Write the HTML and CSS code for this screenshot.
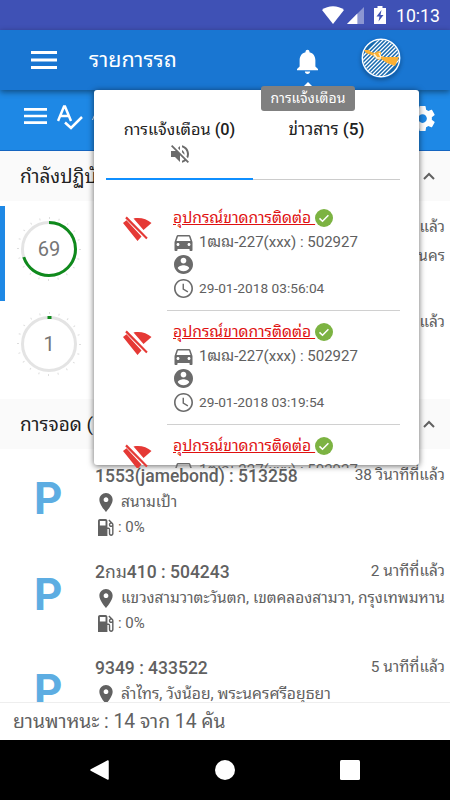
FILE: index.html
```html
<!DOCTYPE html>
<html lang="th">
<head>
    <meta charset="utf-8">
    <title>รายการรถ</title>
    <link rel="stylesheet" href="styles.css">
</head>
<body>
    <svg class="defs" width="0" height="0">
        <symbol id="menu" viewBox="0 0 26 18"><path d="M0 0h26v3H0zM0 7.5h26v3H0zM0 15h26v3H0z"/></symbol>
        <symbol id="wifi-off" viewBox="0 0 29 25"><path d="M0 7 3.500 4.300 18.500 20.500 14.500 25zM10.500 2.500C17 1 24 3 28.500 7L20.500 14zM2.200 2.200 3.800.600 24.700 21.700 23.200 23.200z"/></symbol>
        <symbol id="car" viewBox="3 5 18 16"><path d="M18.920 6.010C18.720 5.420 18.160 5 17.500 5h-11c-.66 0-1.210.42-1.420 1.010L3 12v8c0 .55.45 1 1 1h1c.55 0 1-.45 1-1v-1h12v1c0 .55.45 1 1 1h1c.55 0 1-.45 1-1v-8l-2.080-5.990zM6.500 16c-.83 0-1.500-.67-1.500-1.500S5.670 13 6.500 13s1.500.67 1.500 1.500S7.330 16 6.500 16zm11 0c-.83 0-1.500-.67-1.500-1.500s.67-1.500 1.500-1.500 1.500.67 1.500 1.500-.67 1.500-1.500 1.500zM5 11l1.500-4.500h11L19 11H5z"/></symbol>
        <symbol id="person" viewBox="2 2 20 20"><path d="M12 2C6.480 2 2 6.480 2 12s4.480 10 10 10 10-4.480 10-10S17.520 2 12 2zm0 3c1.660 0 3 1.340 3 3s-1.340 3-3 3-3-1.340-3-3 1.340-3 3-3zm0 14.200c-2.500 0-4.710-1.280-6-3.220.03-1.990 4-3.080 6-3.080 1.990 0 5.970 1.090 6 3.080-1.290 1.940-3.500 3.220-6 3.220z"/></symbol>
        <symbol id="clock" viewBox="2 2 20 20"><path d="M11.990 2C6.470 2 2 6.480 2 12s4.470 10 9.990 10C17.520 22 22 17.520 22 12S17.520 2 11.990 2zM12 20.300c-4.600 0-8.300-3.700-8.300-8.300s3.700-8.300 8.300-8.300 8.300 3.700 8.300 8.300-3.700 8.300-8.300 8.300zm.5-13.300H11v6l5.250 3.150.75-1.230-4.500-2.670z"/></symbol>
        <symbol id="check" viewBox="0 0 18 18"><circle cx="9" cy="9" r="9" fill="#7cb342"/><path d="M4.500 9.400 7.500 12.300 13.400 6.200" fill="none" stroke="#fff" stroke-width="1.500"/></symbol>
        <symbol id="pin" viewBox="5 2 14 20"><path d="M12 2C8.130 2 5 5.130 5 9c0 5.250 7 13 7 13s7-7.750 7-13c0-3.870-3.130-7-7-7zm0 9.500c-1.380 0-2.500-1.120-2.500-2.500s1.120-2.500 2.500-2.500 2.500 1.120 2.500 2.500-1.120 2.500-2.500 2.500z"/></symbol>
        <symbol id="fuel" viewBox="4 3 17 18"><path d="M19.770 7.230l.01-.01-3.720-3.720L15 4.560l2.110 2.110c-.94.36-1.610 1.260-1.610 2.330 0 1.380 1.120 2.500 2.500 2.500.36 0 .69-.08 1-.21v7.210c0 .55-.45 1-1 1s-1-.45-1-1V14c0-1.100-.9-2-2-2h-1V5c0-1.100-.9-2-2-2H6c-1.100 0-2 .9-2 2v16h10v-7.500h1.500v5c0 1.380 1.120 2.500 2.500 2.500s2.500-1.120 2.500-2.500V9c0-.69-.28-1.320-.73-1.770zM12 10H6V5h6v5zm6 0c-.55 0-1-.45-1-1s.45-1 1-1 1 .45 1 1-.45 1-1 1z"/></symbol>
        <symbol id="chevron" viewBox="0 0 12 8"><path d="M1 7 6 2 11 7" fill="none" stroke="#616161" stroke-width="2"/></symbol>
    </svg>

    <div class="statusbar">
        <svg class="wifi" viewBox="0 0 22 18"><path d="M0 4C6-1 16-1 22 4L11 18z"/></svg>
        <svg class="signal" viewBox="0 0 18 18"><path d="M18 0v18H0z" opacity=".4"/><path d="M11 7v11H0z"/></svg>
        <svg class="battery" viewBox="0 0 12 18"><path d="M3.500 0h5v2H12v16H0V2h3.500z"/><path d="M7.500 4 2.500 10.500h3L4.500 15.500l5-6.500h-3z" fill="#3f51b5"/></svg>
        <span class="time">10:13</span>
    </div>

    <header class="header">
        <svg class="menu-icon"><use href="#menu"/></svg>
        <h1 class="title">รายการรถ</h1>
        <svg class="bell" viewBox="4 2 16 20" preserveAspectRatio="none"><path d="M12 22c1.100 0 2-.9 2-2h-4c0 1.100.9 2 2 2zm6-6v-5c0-3.070-1.630-5.640-4.500-6.320V4c0-.83-.67-1.500-1.500-1.500s-1.500.67-1.500 1.500v.68C7.640 5.360 6 7.920 6 11v5l-2 2v1h16v-1l-2-2z"/></svg>
        <svg class="logo" viewBox="0 0 40 40">
            <clipPath id="disc"><circle cx="20" cy="20" r="18"/></clipPath>
            <circle cx="20" cy="20" r="18.700" fill="#1769ae" stroke="#fff" stroke-width="1.400"/>
            <g clip-path="url(#disc)">
                <path d="M-20 40 20 0M-16 40 24 0M-12 40 28 0M-8 40 32 0M-4 40 36 0M0 40 40 0M4 40 44 0M8 40 48 0M12 40 52 0M16 40 56 0M20 40 60 0" stroke="#fff" stroke-width="1.300"/>
            </g>
            <path d="M3 12 8 12 10 14 14 15 17 13 20 14 20 18 24 19 38 19 34 28 26 25 20 21 17 22 13 18 5 15z" fill="#fbb034"/>
            <path d="M13 16 16 20M18 15 20 19M16 20h4" stroke="#fff3d6" stroke-width="1.500"/>
        </svg>
    </header>

    <div class="toolbar">
        <svg class="list-icon"><use href="#menu"/></svg>
        <svg class="spell" viewBox="0 0 26 25"><path d="M1 16 7 1.500h1L14 16M3.500 11h8" fill="none" stroke="#fff" stroke-width="2.500"/><path d="M8 17.500 14 23 25 12" fill="none" stroke="#fff" stroke-width="2.500"/></svg>
        <svg class="sort" viewBox="0 0 12 14"><path d="M6 0 12 14H9L7.500 10h-5L1 14H0z"/></svg>
        <svg class="gear" viewBox="2 2 20 20"><path d="M19.430 12.980c.04-.32.07-.64.07-.98s-.03-.66-.07-.98l2.110-1.650c.19-.15.24-.42.12-.64l-2-3.460c-.12-.22-.39-.3-.61-.22l-2.490 1c-.52-.4-1.080-.73-1.690-.98l-.38-2.650C14.460 2.180 14.250 2 14 2h-4c-.25 0-.46.18-.49.42l-.38 2.650c-.61.25-1.170.59-1.690.98l-2.490-1c-.23-.09-.49 0-.61.22l-2 3.460c-.13.22-.07.49.12.64l2.110 1.650c-.04.32-.07.65-.07.98s.03.66.07.98l-2.110 1.650c-.19.15-.24.42-.12.64l2 3.460c.12.22.39.3.61.22l2.490-1c.52.4 1.080.73 1.690.98l.38 2.650c.03.24.24.42.49.42h4c.25 0 .46-.18.49-.42l.38-2.650c.61-.25 1.170-.59 1.690-.98l2.490 1c.23.09.49 0 .61-.22l2-3.460c.12-.22.07-.49-.12-.64l-2.110-1.650zM12 15.500c-1.930 0-3.500-1.570-3.500-3.500s1.570-3.500 3.500-3.500 3.500 1.570 3.500 3.500-1.570 3.500-3.500 3.500z"/></svg>
    </div>

    <main class="list">
        <div class="section">
            <span>กำลังปฏิบัติงาน</span>
            <svg class="chevron"><use href="#chevron"/></svg>
        </div>
        <div class="moving active">
            <svg class="gauge" viewBox="0 0 64 64">
                <circle class="ticks" cx="32" cy="32" r="31" pathLength="200"/>
                <circle class="track" cx="32" cy="32" r="26.500"/>
                <circle class="value" cx="32" cy="32" r="26.500" pathLength="100" stroke-dasharray="70 100"/>
                <text x="32" y="38.500">69</text>
            </svg>
            <div class="info"><p class="when">1 นาทีที่แล้ว</p><p>กรุงเทพมหานคร</p></div>
        </div>
        <div class="moving">
            <svg class="gauge" viewBox="0 0 64 64">
                <circle class="ticks" cx="32" cy="32" r="31" pathLength="200"/>
                <circle class="track" cx="32" cy="32" r="26.500"/>
                <path d="M30.500 5.500h4" stroke="#0f8a1c" stroke-width="3"/>
                <text x="32" y="38.500">1</text>
            </svg>
            <div class="info"><p class="when">1 นาทีที่แล้ว</p></div>
        </div>
        <div class="section second">
            <span>การจอด (12)</span>
            <svg class="chevron"><use href="#chevron"/></svg>
        </div>
        <div class="parked">
            <div class="p-icon">P</div>
            <div class="details">
                <div class="top"><b>1553(jamebond) : 513258</b><span class="when">38 วินาทีที่แล้ว</span></div>
                <div class="place"><svg class="pin"><use href="#pin"/></svg><span>สนามเป้า</span></div>
                <div class="fuel"><svg><use href="#fuel"/></svg><span>: 0%</span></div>
            </div>
        </div>
        <div class="parked">
            <div class="p-icon">P</div>
            <div class="details">
                <div class="top"><b>2<i>กม</i>410 : 504243</b><span class="when">2 นาทีที่แล้ว</span></div>
                <div class="place"><svg class="pin"><use href="#pin"/></svg><span>แขวงสามวาตะวันตก, เขตคลองสามวา, กรุงเทพมหาน</span></div>
                <div class="fuel"><svg><use href="#fuel"/></svg><span>: 0%</span></div>
            </div>
        </div>
        <div class="parked">
            <div class="p-icon">P</div>
            <div class="details">
                <div class="top"><b>9349 : 433522</b><span class="when">5 นาทีที่แล้ว</span></div>
                <div class="place last"><svg class="pin"><use href="#pin"/></svg><span>ลำไทร, วังน้อย, พระนครศรีอยุธยา</span></div>
            </div>
        </div>
    </main>

    <footer class="footer"><span>ยานพาหนะ : 14 จาก 14 คัน</span></footer>
    <nav class="navbar">
        <svg viewBox="0 0 20 20"><path d="M1 10 18 1v18z" stroke="#fff" stroke-width="1.500" stroke-linejoin="round"/></svg>
        <svg viewBox="0 0 20 20"><circle cx="10" cy="10" r="10"/></svg>
        <svg viewBox="0 0 20 20"><rect width="20" height="20" rx="1.500"/></svg>
    </nav>

    <div class="popup">
        <div class="tabs">
            <div class="tab selected">
                <span class="tab-label">การแจ้งเตือน <b>(0)</b></span>
                <svg class="mute" viewBox="3 3 18 18"><path d="M16.500 12c0-1.770-1.020-3.290-2.500-4.030v2.210l2.450 2.450c.03-.2.050-.41.050-.63zm2.500 0c0 .94-.2 1.820-.54 2.640l1.510 1.510C20.630 14.910 21 13.500 21 12c0-4.280-2.990-7.860-7-8.770v2.060c2.890.86 5 3.540 5 6.710zM4.270 3L3 4.270 7.730 9H3v6h4l5 5v-6.730l4.250 4.250c-.67.52-1.420.93-2.250 1.180v2.060c1.380-.31 2.630-.95 3.690-1.810L19.730 21 21 19.730l-9-9L4.270 3zM12 4L9.910 6.090 12 8.180V4z"/></svg>
            </div>
            <div class="tab"><span class="tab-label news">ข่าวสาร <b>(5)</b></span></div>
        </div>
        <div class="notices">
            <div class="notice">
                <svg class="offline"><use href="#wifi-off"/></svg>
                <div class="body">
                    <div class="head"><a>อุปกรณ์ขาดการติดต่อ&nbsp;</a><svg><use href="#check"/></svg></div>
                    <div class="line car"><svg><use href="#car"/></svg><span>1ฒฌ-227(xxx) : 502927</span></div>
                    <div class="line"><svg><use href="#person"/></svg></div>
                    <div class="line date"><svg><use href="#clock"/></svg><span>29-01-2018 03:56:04</span></div>
                </div>
            </div>
            <div class="notice">
                <svg class="offline"><use href="#wifi-off"/></svg>
                <div class="body">
                    <div class="head"><a>อุปกรณ์ขาดการติดต่อ&nbsp;</a><svg><use href="#check"/></svg></div>
                    <div class="line car"><svg><use href="#car"/></svg><span>1ฒฌ-227(xxx) : 502927</span></div>
                    <div class="line"><svg><use href="#person"/></svg></div>
                    <div class="line date"><svg><use href="#clock"/></svg><span>29-01-2018 03:19:54</span></div>
                </div>
            </div>
            <div class="notice">
                <svg class="offline"><use href="#wifi-off"/></svg>
                <div class="body">
                    <div class="head"><a>อุปกรณ์ขาดการติดต่อ&nbsp;</a><svg><use href="#check"/></svg></div>
                    <div class="line car"><svg><use href="#car"/></svg><span>1ฒฌ-227(xxx) : 502927</span></div>
                </div>
            </div>
        </div>
    </div>
    <div class="tooltip">การแจ้งเตือน</div>
</body>
</html>
```

FILE: styles.css
```css
* {
    box-sizing: border-box;
}

body {
    margin: 0;
    width: 450px;
    height: 800px;
    overflow: hidden;
    position: relative;
    display: flex;
    flex-direction: column;
    background: #fff;
    color: #616161;
    font-family: Roboto, "Noto Sans Thai Looped", "Noto Looped Thai", "Droid Sans Thai", Loma, Waree, "Noto Sans Thai", "Noto Sans", sans-serif;
}

p, h1 {
    margin: 0;
    font-weight: 400;
}

svg {
    flex: none;
    fill: currentColor;
}

span, a, b {
    white-space: nowrap;
}

b {
    font-weight: 500;
}

i {
    font-style: normal;
    font-weight: 400;
}

.defs {
    position: absolute;
}

/* top bars */
.statusbar {
    height: 30px;
    flex: none;
    display: flex;
    align-items: center;
    justify-content: flex-end;
    padding-right: 10px;
    background: #3f51b5;
    color: #fff;
}

.wifi {
    width: 22px;
    height: 18px;
    margin-right: 3px;
}

.signal {
    width: 17px;
    height: 17px;
    margin-right: 10px;
}

.battery {
    width: 12px;
    height: 18px;
    margin-right: 10px;
}

.time {
    font-size: 17.7px;
    line-height: 30px;
    padding-top: 2px;
}

.header {
    height: 60px;
    flex: none;
    display: flex;
    align-items: center;
    padding-left: 31px;
    background: #1976d2;
    color: #fff;
    box-shadow: 0 2px 6px rgba(0, 0, 0, 0.45);
    z-index: 1;
}

.menu-icon {
    width: 26px;
    height: 18px;
}

.title {
    width: 208px;
    margin-left: 32px;
    font-size: 21.5px;
    line-height: 58px;
}

.bell {
    width: 21px;
    height: 25px;
    margin-top: 3px;
}

.logo {
    width: 40px;
    height: 40px;
    margin: -5px 0 0 43px;
    border-radius: 50%;
    box-shadow: 0 2px 4px rgba(0, 0, 0, 0.3);
}

.toolbar {
    height: 61px;
    flex: none;
    display: flex;
    align-items: flex-start;
    padding: 18px 15px 0 24px;
    background: #1e88e5;
    border-bottom: 1px solid #1565c0;
    color: #fff;
}

.list-icon {
    width: 23px;
    height: 16px;
}

.spell {
    width: 26px;
    height: 25px;
    margin: -3px 0 0 10px;
}

.sort {
    width: 12px;
    height: 14px;
    margin: -2px 0 0 9px;
}

.gear {
    width: 25px;
    height: 25px;
    margin: -2px 0 0 auto;
}

/* vehicle list */
.list {
    height: 551px;
    flex: none;
    overflow: hidden;
}

.section {
    height: 50px;
    display: flex;
    align-items: center;
    justify-content: space-between;
    padding: 0 15px 0 20px;
    background: #fafafa;
    color: #212121;
    font-size: 19px;
}

.section span {
    line-height: 30px;
    padding-top: 1px;
}

.section.second {
    margin-bottom: 13px;
}

.chevron {
    width: 12px;
    height: 8px;
}

.moving {
    height: 95px;
    display: flex;
    justify-content: space-between;
    padding: 11px 5px 0 17px;
}

.moving.active {
    margin-top: 5px;
    padding-left: 12px;
    border-left: 5px solid #1e88e5;
}

.moving + .moving {
    margin-bottom: 3px;
}

.gauge {
    width: 64px;
    height: 64px;
    fill: none;
}

.gauge text {
    fill: #757575;
    font-size: 20px;
    text-anchor: middle;
}

.ticks {
    stroke: #ddd;
    stroke-width: 2;
    stroke-dasharray: 1 9;
}

.track {
    stroke: #e4e4e4;
    stroke-width: 3;
}

.value {
    stroke: #0f8a1c;
    stroke-width: 3;
    transform: rotate(-90deg);
    transform-origin: 32px 32px;
}

.info {
    text-align: right;
    font-size: 15.4px;
    line-height: 29px;
    margin-top: -4px;
}

.when {
    font-size: 15.4px;
}

.parked {
    height: 96px;
    display: flex;
    padding-right: 5px;
}

.p-icon {
    width: 95px;
    padding-left: 34px;
    color: #5dade2;
    font-size: 44px;
    font-weight: 700;
    line-height: 75px;
}

.details {
    flex: 1;
}

.top {
    height: 27px;
    display: flex;
    justify-content: space-between;
    line-height: 26px;
}

.top b {
    padding-top: 1px;
    font-size: 17.5px;
}

.place {
    height: 26px;
    display: flex;
    align-items: center;
    font-size: 15.45px;
    line-height: 26px;
}

.place.last {
    font-size: 15.7px;
}

.pin {
    width: 14px;
    height: 19px;
    margin: 0 8px 0 4px;
}

.fuel {
    height: 24px;
    display: flex;
    align-items: center;
    padding-left: 3px;
    font-size: 15px;
}

.fuel svg {
    width: 16px;
    height: 17px;
    margin-right: 4px;
}

.footer {
    height: 38px;
    flex: none;
    padding-left: 13px;
    border-top: 1px solid #eee;
    background: #fff;
    font-size: 19.3px;
    line-height: 38px;
}

.navbar {
    height: 60px;
    flex: none;
    display: flex;
    justify-content: center;
    align-items: center;
    gap: 105px;
    background: #000;
    color: #fff;
}

.navbar svg {
    width: 20px;
    height: 20px;
}

/* notification popup */
.popup {
    position: absolute;
    left: 94px;
    top: 90px;
    width: 325px;
    height: 375px;
    padding: 0 19px 0 12px;
    background: #fff;
    border-radius: 3px;
    box-shadow: 0 1px 6px rgba(0, 0, 0, 0.6);
    z-index: 2;
}

.tabs {
    height: 90px;
    display: flex;
    border-bottom: 1px solid #ccc;
    color: #212121;
}

.tab {
    width: 147px;
    height: 90px;
    display: flex;
    flex-direction: column;
    align-items: center;
    padding-top: 27px;
}

.tab.selected {
    border-bottom: 2px solid #0f8fff;
}

.tab-label {
    height: 28px;
    font-size: 16.3px;
    line-height: 25px;
}

.tab-label.news {
    font-size: 17.2px;
}

.mute {
    width: 18px;
    height: 18px;
    color: #6b6b6b;
}

.notices {
    height: 288px;
    padding-top: 17px;
    overflow: hidden;
}

.notice {
    height: 114px;
    display: flex;
    padding-left: 17px;
}

.offline {
    width: 29px;
    height: 25px;
    margin: 19px 15px 0 0;
    color: #e53935;
}

.body {
    width: 233px;
    height: 114px;
    padding: 8px 0 0 7px;
    border-bottom: 1px solid #d0d0d0;
}

.head {
    height: 26px;
    display: flex;
    align-items: center;
}

.head a {
    margin: -2px 0 0 -1px;
    color: #e01010;
    font-size: 15.7px;
    line-height: 25px;
    text-decoration: underline;
}

.head svg {
    width: 18px;
    height: 18px;
}

.line {
    height: 21px;
    display: flex;
    align-items: center;
    color: #606060;
}

.line svg {
    width: 19px;
    height: 19px;
    margin-right: 6px;
    color: #6b6b6b;
}

.line.car {
    height: 23px;
    font-size: 15px;
}

.line.car svg {
    height: 16px;
}

.line.car span {
    line-height: 20px;
    padding-bottom: 2px;
}

.line.date {
    height: 26px;
    font-size: 13.7px;
}

.tooltip {
    position: absolute;
    left: 261px;
    top: 86px;
    width: 94px;
    height: 25px;
    border-radius: 3px;
    background: #808080;
    color: #fff;
    font-size: 14px;
    line-height: 24px;
    text-align: center;
    z-index: 3;
}

.tooltip::before {
    content: "";
    position: absolute;
    left: 43px;
    top: -4px;
    border: 4px solid transparent;
    border-top: 0;
    border-bottom-color: #fff;
}
```
